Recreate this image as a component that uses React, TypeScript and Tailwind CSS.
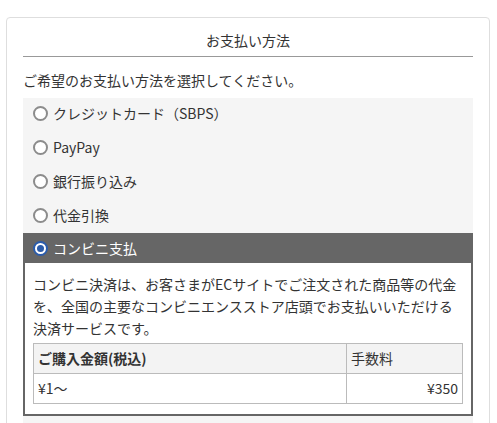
const options = ["クレジットカード（SBPS）", "PayPay", "銀行振り込み", "代金引換"];

function Radio({ checked }: { checked?: boolean }) {
  if (checked) {
    return (
      <span className="w-[15px] h-[15px] rounded-full border-2 border-[#2b5cab] bg-white flex items-center justify-center shrink-0">
        <span className="w-[7px] h-[7px] rounded-full bg-[#2b5cab]"></span>
      </span>
    );
  }
  return <span className="w-[15px] h-[15px] rounded-full border-2 border-[#8c8c8c] bg-white shrink-0"></span>;
}

export default function App() {
  return (
    <div
      className="h-[423px] overflow-hidden bg-white pt-[17px] pl-[6px] pr-[7px] text-[14px] text-[#333]"
      style={{ fontFamily: '"Noto Sans CJK JP", "Noto Sans", sans-serif' }}
    >
      <section className="border border-[#dedede] rounded-[4px] px-4 pt-[12px] pb-4">
        <h2 className="text-center leading-[21px] pb-[5px] border-b border-[#999]">お支払い方法</h2>
        <p className="leading-[21px] mt-[13px] mb-[7px]">ご希望のお支払い方法を選択してください。</p>

        <div className="bg-[#f5f5f5] pb-6">
          <div className="flex flex-col gap-1">
            {options.map((label) => (
              <label key={label} className="h-[30px] flex items-center gap-[5px] px-[10px]">
                <Radio />
                <span>{label}</span>
              </label>
            ))}
          </div>

          <div className="mt-[3px]">
            <div className="h-[30px] bg-[#666] text-white flex items-center gap-[5px] px-[10px]">
              <Radio checked />
              <span>コンビニ支払</span>
            </div>
            <div className="bg-white border-2 border-t-0 border-[#666] px-2 pt-[10px] pb-[10px]">
              <p className="leading-[22px] whitespace-nowrap">
                コンビニ決済は、お客さまがECサイトでご注文された商品等の代金
                <br />
                を、全国の主要なコンビニエンスストア店頭でお支払いいただける
                <br />
                決済サービスです。
              </p>
              <table className="w-full mt-[4px] border-collapse">
                <thead>
                  <tr className="bg-[#f3f3f3]">
                    <th className="h-[30px] border border-[#bbb] px-[4px] text-left font-bold">ご購入金額(税込)</th>
                    <th className="h-[30px] w-[116px] border border-[#bbb] px-[4px] text-left font-normal">手数料</th>
                  </tr>
                </thead>
                <tbody>
                  <tr>
                    <td className="h-[30px] border border-[#bbb] px-[4px]">¥1〜</td>
                    <td className="h-[30px] border border-[#bbb] px-[4px] text-right">¥350</td>
                  </tr>
                </tbody>
              </table>
            </div>
          </div>
        </div>
      </section>
    </div>
  );
}
